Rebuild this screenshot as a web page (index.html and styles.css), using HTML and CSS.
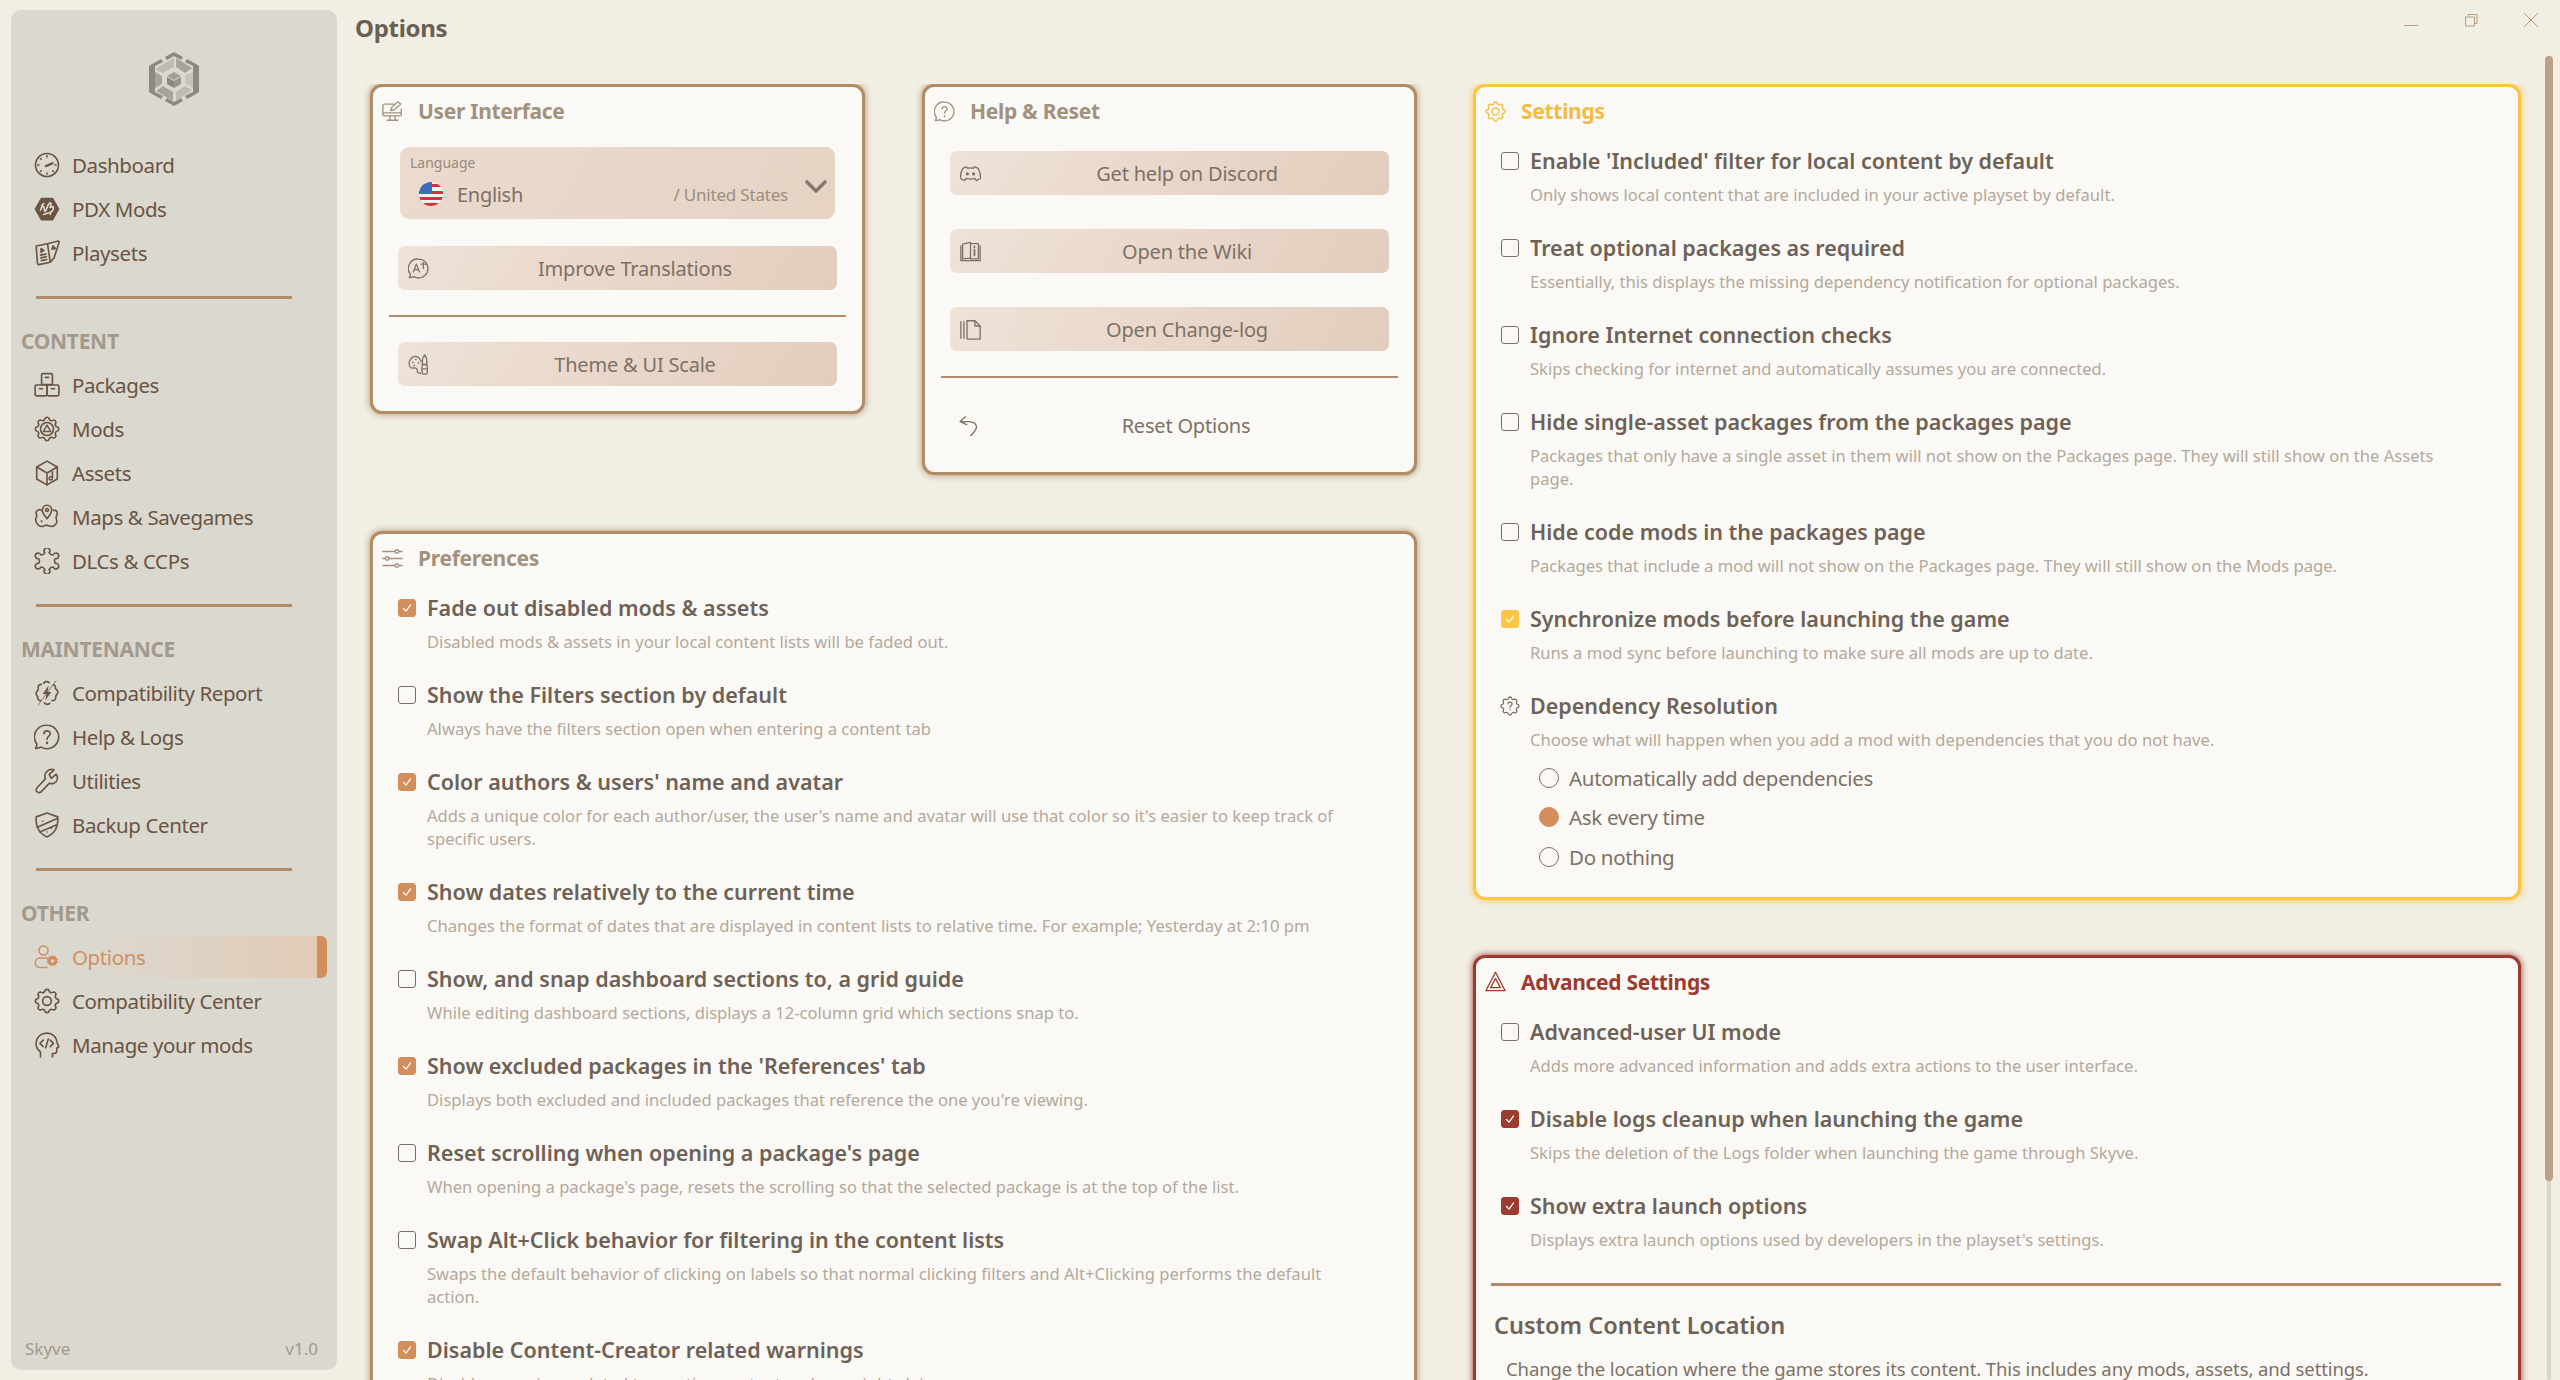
FILE: index.html
```html
<!DOCTYPE html>
<html lang="en">
<head>
    <meta charset="UTF-8">
    <meta name="viewport" content="width=device-width, initial-scale=1.0">
    <title>Skyve - Options</title>
    <link rel="stylesheet" href="styles.css">
</head>
<body>
    <svg class="icon-defs" width="0" height="0">
        <symbol id="i-dashboard" viewBox="0 0 24 24"><circle cx="12" cy="12" r="10.6"/><path d="M12 3.6v1M20.4 12h-1M3.6 12h1M12 20.4v-1M6 6l.7.7M18 18l-.7-.7M6 18l.7-.7"/><path d="M11 13l6-2.6" stroke-width="2.2"/></symbol>
        <symbol id="i-pdx" viewBox="0 0 24 24"><path class="solid" d="M6.5 1.5h11L23.5 12l-6 10.5h-11L.5 12z"/><path class="cut" d="M6 13c1-3 2-4 3-3s0 3 1 4 2-5 4-7 2 1 1 3 3-2 3 1-3 3-3 6M9 17c2-1 5-1 8-3M7 9l2-2"/></symbol>
        <symbol id="i-playsets" viewBox="0 0 24 24"><path d="M2 5.5l10.5-2 2.500 17-10.500 2.200c-.8.1-1.200-.3-1.300-1z"/><path d="M13 3.200L22.500 1c.6 0 .8.4.7 1L18.500 16.500l-3 3.500"/><path d="M6.500 8l2.500 1.500-2.500 2zM6 14l5-1M6.300 16.500l5-1M6.700 19l5-1M16.500 8.500l1.200-3 2 2.400z"/></symbol>
        <symbol id="i-packages" viewBox="0 0 24 24"><rect x="7" y="1.500" width="10" height="10" rx="1"/><rect x="1" y="12" width="11" height="10" rx="1.500"/><rect x="12" y="12" width="11" height="10" rx="1.500"/><path d="M10.500 5h3M5 15.500h3M16 15.500h3"/></symbol>
        <symbol id="i-mods" viewBox="0 0 24 24"><path d="M10.325 4.317c.426-1.756 2.924-1.756 3.350 0a1.724 1.724 0 0 0 2.573 1.066c1.543-.94 3.310.826 2.370 2.370a1.724 1.724 0 0 0 1.065 2.572c1.756.426 1.756 2.924 0 3.350a1.724 1.724 0 0 0-1.066 2.573c.94 1.543-.826 3.310-2.370 2.370a1.724 1.724 0 0 0-2.572 1.065c-.426 1.756-2.924 1.756-3.350 0a1.724 1.724 0 0 0-2.573-1.066c-1.543.94-3.310-.826-2.370-2.370a1.724 1.724 0 0 0-1.065-2.572c-1.756-.426-1.756-2.924 0-3.350a1.724 1.724 0 0 0 1.066-2.573c-.94-1.543.826-3.310 2.370-2.370 1 .608 2.296.07 2.572-1.065z" transform="translate(-2.400 -2.400) scale(1.200)" stroke-width="1.250"/><circle cx="12" cy="12" r="6"/><path d="M12 8.500l3.500 5.800h-7z" stroke-width="1.300"/></symbol>
        <symbol id="i-assets" viewBox="0 0 24 24"><path d="M12 1l9.500 5.500v11L12 23l-9.500-5.500v-11z"/><path d="M2.500 6.500L12 12l9.500-5.500M12 12v11"/><path d="M17 11v6a1.500 1.500 0 1 1-1.500-1.500H17"/></symbol>
        <symbol id="i-maps" viewBox="0 0 24 24"><path d="M7.500 6.500c-1-1.500-3-1.500-4-.8-1.500 1-1.800 3-1 4.500.6 1.100-.8 2.300-1 4 .1 3.500 3 6.800 6 6.500 2-.2 2.500-1.200 4-1.200s3 1.500 5 1.200c3-.3 5-3 4.500-5.500-.3-1.300-.8-2-.5-3.500.2-1 1-1.500 1-3 0-2-1.500-3-3.500-3"/><path d="M12 13.500c-2-2.500-4.300-5-4.300-8a4.300 4.300 0 0 1 8.600 0c0 3-2.300 5.500-4.300 8z"/><circle cx="12" cy="5.500" r="1.300"/><circle cx="7" cy="16" r="1" class="dot"/></symbol>
        <symbol id="i-dlc" viewBox="0 0 24 24"><path d="M10.060 4.240A2.600 2.600 0 1 1 13.940 4.240A4 4 0 0 0 17.750 6.440A2.600 2.600 0 1 1 19.690 9.790A4 4 0 0 0 19.690 14.210A2.600 2.600 0 1 1 17.750 17.560A4 4 0 0 0 13.940 19.760A2.600 2.600 0 1 1 10.060 19.760A4 4 0 0 0 6.250 17.560A2.600 2.600 0 1 1 4.310 14.210A4 4 0 0 0 4.310 9.790A2.600 2.600 0 1 1 6.250 6.440A4 4 0 0 0 10.060 4.240z"/></symbol>
        <symbol id="i-report" viewBox="0 0 24 24"><path d="M9 3c1-1.800 3.500-2 5-.6M18 4.500c1.500.2 2 2 1.800 3.500 2 1 3 3.500 1.500 5-.8.8-1.300 1.500-1.300 3 .2 2-1.500 3.500-3.500 3M14.500 21.500c-1.500 1.200-3.500 1.100-5-.5M6 19c-2 0-3-1.500-2.500-3.500C2.500 14.500 1 12 2.800 10.500 3.800 9.700 4 8.500 3.800 7.500 3.500 5.500 5 4 6.800 4"/><path class="solid" d="M13.500 5L8 13h3.500l-1 6 5.500-8h-3.500z"/><path d="M4 23L20 1" stroke-width=".7"/></symbol>
        <symbol id="i-help" viewBox="0 0 24 24"><path d="M12 1.200a10.800 10.800 0 1 1-5.500 20.100c-1.500.8-3.500 1.200-5 1.200.8-1 1.200-2.300 1.100-4A10.800 10.800 0 0 1 12 1.200z"/><path d="M9.200 9c0-3.500 5.800-3.500 5.800 0 0 2.300-3 2.200-3 5"/><path d="M12 17.300v.2" stroke-width="2.200"/></symbol>
        <symbol id="i-wrench" viewBox="0 0 24 24"><path d="M16 9.500l4.500-3.800c2 3 1.300 7-2 8.300-1.500.6-3 .5-4.200 0L6.500 22c-1 1-2.300 1-3.500 0-1.300-1-1.300-2.500-.2-3.700L10.500 10c-1-2.800-.3-5.500 2-7.300 1.800-1.400 4-1.700 6-1L14 5.800z"/></symbol>
        <symbol id="i-shield" viewBox="0 0 24 24"><path d="M12 1l10 3.500c.5 8-2 15-10 18.500C4 19.500 1.500 12.500 2 4.500z"/><path d="M3 14L21.500 6M5.500 18.500L20.500 12M8 8.500v0M16 15v0M12 18.500v0"/></symbol>
        <symbol id="i-options" viewBox="0 0 26 24"><circle cx="9.500" cy="5.500" r="4.500"/><path d="M13.500 13H6a4.500 4.500 0 0 0 0 9.500h7"/><path class="solid" d="M18.500 10l1.200 1.500 2-.4.500 2 1.800.9-.9 1.800.9 1.800-1.800.9-.5 2-2-.4-1.200 1.500-1.500-1.500-2 .4-.5-2-1.800-.9.9-1.800-.9-1.800 1.800-.9.500-2 2 .4z"/><circle class="hole" cx="18.500" cy="16" r="1.700"/></symbol>
        <symbol id="i-gear" viewBox="0 0 24 24"><path d="M10.325 4.317c.426-1.756 2.924-1.756 3.350 0a1.724 1.724 0 0 0 2.573 1.066c1.543-.94 3.310.826 2.370 2.370a1.724 1.724 0 0 0 1.065 2.572c1.756.426 1.756 2.924 0 3.350a1.724 1.724 0 0 0-1.066 2.573c.94 1.543-.826 3.310-2.370 2.370a1.724 1.724 0 0 0-2.572 1.065c-.426 1.756-2.924 1.756-3.350 0a1.724 1.724 0 0 0-2.573-1.066c-1.543.94-3.310-.826-2.370-2.370a1.724 1.724 0 0 0-1.065-2.572c-1.756-.426-1.756-2.924 0-3.350a1.724 1.724 0 0 0 1.066-2.573c-.94-1.543.826-3.310 2.370-2.370 1 .608 2.296.07 2.572-1.065z" transform="translate(-2.400 -2.400) scale(1.200)" stroke-width="1.300"/><circle cx="12" cy="12" r="4"/></symbol>
        <symbol id="i-head" viewBox="0 0 24 24"><path d="M6 23v-4.500C3 16 1.500 13 2 9.500 2.800 4 7 1 12 1c5 0 8.500 3.500 9 7.500.1 1.500.5 2.500 2 5-.8 1-1.500 1-2 1.300v3c0 1.500-1.500 2.200-4 2.200v3"/><path d="M8.500 7.500L5.500 10.500l3 3M15 7.500l3 3-3 3M13.200 6.500l-2.400 8"/></symbol>
        <symbol id="i-monitor" viewBox="0 0 24 24"><path d="M14 3.500H2.500A1.500 1.500 0 0 0 1 5v10.500A1.500 1.500 0 0 0 2.500 17h18a1.500 1.500 0 0 0 1.500-1.500V9"/><path d="M1 13.500h21M9 17v4.500M15 17v4.500M6 22h12"/><path d="M10 11l1-3.500L18 1l3.500 2.500L14 10z"/></symbol>
        <symbol id="i-translate" viewBox="0 0 24 24"><path d="M12 1.200a10.800 10.800 0 1 1-5.500 20.100c-1.500.8-3.500 1.200-5 1.200.8-1 1.200-2.300 1.100-4A10.800 10.800 0 0 1 12 1.200z"/><path d="M6 16L9.500 7l3.500 9M7.200 13.200h4.600M15 7h5M17.500 5v7"/></symbol>
        <symbol id="i-palette" viewBox="0 0 24 24"><path d="M15 8.500C13.500 3.500 9 1.500 5.500 3.500 2 5.500.2 10 2 14c1 2 3 2.500 5 2 2.500-.5 3.500.8 3.500 3 0 2 2 3.300 4 3"/><circle cx="5.500" cy="9.500" r="1" class="dot"/><circle cx="9" cy="6" r="1" class="dot"/><circle cx="12" cy="10" r="1" class="dot"/><circle cx="7" cy="13" r="1" class="dot"/><rect x="16" y="12" width="6" height="11" rx="2"/><path d="M16.500 12V7c0-1.500 1-4 2.500-6 1.500 2 2.500 4.500 2.500 6v5M16 17h6"/></symbol>
        <symbol id="i-discord" viewBox="0 0 24 24"><path d="M7.500 4.500C5.500 5 4 5.500 3 6.500 1.500 9.500.3 13.500.5 17.500c1.500 1.300 3.300 2 5 2.500l1.500-2.500c3 1 7 1 10 0l1.500 2.500c1.700-.5 3.500-1.200 5-2.500.2-4-1-8-2.500-11-1-1-2.500-1.500-4.500-2l-1 1.500c-2-.4-5-.4-7 0z"/><circle class="dot" cx="8.500" cy="12.500" r="1.800"/><circle class="dot" cx="15.500" cy="12.500" r="1.800"/></symbol>
        <symbol id="i-book" viewBox="0 0 24 24"><path d="M3 3.500L12 1.500v18l-9 1zM12 3h9v17.500h-9M1 5.500V22.500h22V5.500"/><path d="M16.500 10v6.500M16.500 6.500v1" stroke-width="2"/></symbol>
        <symbol id="i-changelog" viewBox="0 0 24 24"><path d="M8 2h9l6 6v15H9a1 1 0 0 1-1-1z"/><path d="M17 2v6h6M4.500 3v19M1 3v19"/></symbol>
        <symbol id="i-undo" viewBox="0 0 24 24"><path d="M8.500 2L2.500 7.500 10 11M3.500 7.500H13c5.500 0 8.500 3.500 8 7-.4 3-2.500 5-5 7.500l-1.500 1.500"/></symbol>
        <symbol id="i-sliders" viewBox="0 0 24 24"><path d="M1 4h14M19 4h4M1 12h3M8 12h15M1 20h14M19 20h4"/><circle cx="17" cy="4" r="2"/><circle cx="6" cy="12" r="2"/><circle cx="17" cy="20" r="2"/></symbol>
        <symbol id="i-depend" viewBox="0 0 24 24"><path d="M10.325 4.317c.426-1.756 2.924-1.756 3.350 0a1.724 1.724 0 0 0 2.573 1.066c1.543-.94 3.310.826 2.370 2.370a1.724 1.724 0 0 0 1.065 2.572c1.756.426 1.756 2.924 0 3.350a1.724 1.724 0 0 0-1.066 2.573c.94 1.543-.826 3.310-2.370 2.370a1.724 1.724 0 0 0-2.572 1.065c-.426 1.756-2.924 1.756-3.350 0a1.724 1.724 0 0 0-2.573-1.066c-1.543.94-3.310-.826-2.370-2.370a1.724 1.724 0 0 0-1.065-2.572c-1.756-.426-1.756-2.924 0-3.350a1.724 1.724 0 0 0 1.066-2.573c-.94-1.543.826-3.310 2.370-2.370 1 .608 2.296.07 2.572-1.065z" transform="translate(-2.400 -2.400) scale(1.200)" stroke-width="1.300"/><path d="M9.500 9.500c0-3 5-3 5 0 0 2-2.500 1.700-2.500 4M12 16v.5"/></symbol>
        <symbol id="i-warning" viewBox="0 0 24 24"><path d="M12 1.500L23 22.500H1z"/><path d="M12 8.500L17.500 19h-11z"/></symbol>
        <symbol id="i-check" viewBox="0 0 18 18"><path d="M5 9.500l3 3 5-7"/></symbol>
    </svg>

    <div class="app">
        <aside class="sidebar">
            <div class="logo">
                <svg viewBox="0 0 52 56" width="52" height="56">
                    <path d="M26 1l9 5-2 3-7-4-7 4-2-3z" fill="#8e887f"/>
                    <path d="M26 55l-9-5 2-3 7 4 7-4 2 3z" fill="#8e887f"/>
                    <path d="M4 13l9-5 2 3-8 4v9H1v-9zM48 43l-9 5-2-3 8-4v-9h6v9z" fill="#8e887f"/>
                    <path d="M48 13l-9-5-2 3 8 4v18h6V15zM4 43l9 5 2-3-8-4V23H1v18z" fill="#8e887f"/>
                    <path d="M26 7v9l-11 6-8-4z" fill="#c0bbb1"/>
                    <path d="M28 7l16 10-7 5-9-6z" fill="#a9a399"/>
                    <path d="M45 21v16l-8-5v-8z" fill="#c9c4ba"/>
                    <path d="M7 21l7 4v8l-7 4z" fill="#a9a399"/>
                    <path d="M8 40l7-5 10 6v9z" fill="#a9a399"/>
                    <path d="M28 41l9-6 7 4-16 11z" fill="#c0bbb1"/>
                    <path d="M26 19l9 5v10l-9 5-9-5V24z" fill="#dbd8d0"/>
                    <path d="M26 21l7 4-7 4-7-4z" fill="#a39d93"/>
                    <path d="M19 26l7 4v7l-7-4z" fill="#8e887f"/>
                    <path d="M33 26l-7 4v7l7-4z" fill="#9a948a"/>
                </svg>
            </div>
            <nav class="nav">
                <a class="nav-item"><svg class="nav-icon"><use href="#i-dashboard"/></svg>Dashboard</a>
                <a class="nav-item"><svg class="nav-icon"><use href="#i-pdx"/></svg>PDX Mods</a>
                <a class="nav-item"><svg class="nav-icon"><use href="#i-playsets"/></svg>Playsets</a>
                <hr class="nav-rule">
                <h2 class="nav-head">CONTENT</h2>
                <a class="nav-item"><svg class="nav-icon"><use href="#i-packages"/></svg>Packages</a>
                <a class="nav-item"><svg class="nav-icon"><use href="#i-mods"/></svg>Mods</a>
                <a class="nav-item"><svg class="nav-icon"><use href="#i-assets"/></svg>Assets</a>
                <a class="nav-item"><svg class="nav-icon"><use href="#i-maps"/></svg>Maps &amp; Savegames</a>
                <a class="nav-item"><svg class="nav-icon"><use href="#i-dlc"/></svg>DLCs &amp; CCPs</a>
                <hr class="nav-rule">
                <h2 class="nav-head">MAINTENANCE</h2>
                <a class="nav-item"><svg class="nav-icon"><use href="#i-report"/></svg>Compatibility Report</a>
                <a class="nav-item"><svg class="nav-icon"><use href="#i-help"/></svg>Help &amp; Logs</a>
                <a class="nav-item"><svg class="nav-icon"><use href="#i-wrench"/></svg>Utilities</a>
                <a class="nav-item"><svg class="nav-icon"><use href="#i-shield"/></svg>Backup Center</a>
                <hr class="nav-rule">
                <h2 class="nav-head">OTHER</h2>
                <a class="nav-item active"><svg class="nav-icon"><use href="#i-options"/></svg>Options</a>
                <a class="nav-item"><svg class="nav-icon"><use href="#i-gear"/></svg>Compatibility Center</a>
                <a class="nav-item"><svg class="nav-icon"><use href="#i-head"/></svg>Manage your mods</a>
            </nav>
            <footer class="side-foot"><span>Skyve</span><span>v1.0</span></footer>
        </aside>

        <main class="main">
            <header class="topbar">
                <h1 class="page-title">Options</h1>
                <div class="win-controls">
                    <svg width="14" height="14" viewBox="0 0 14 14"><path d="M0 12.500h14"/></svg>
                    <svg width="14" height="14" viewBox="0 0 14 14"><rect x="1.500" y="4" width="9" height="9"/><path d="M4 3.500V1.500h9v9h-2"/></svg>
                    <svg width="14" height="14" viewBox="0 0 14 14"><path d="M0 0l14 14M14 0L0 14"/></svg>
                </div>
            </header>
            <div class="content">
                <div class="column">
                    <div class="card-row">
                        <section class="card card-small">
                            <h3 class="card-title"><svg class="title-icon"><use href="#i-monitor"/></svg>User Interface</h3>
                            <div class="select">
                                <span class="select-label">Language</span>
                                <div class="select-value">
                                    <svg class="flag" viewBox="0 0 24 24">
                                        <defs><clipPath id="flag-clip"><circle cx="12" cy="12" r="12"/></clipPath></defs>
                                        <g clip-path="url(#flag-clip)">
                                            <rect width="24" height="24" fill="#f2f2f2"/>
                                            <path d="M0 2h24v3H0zM0 9h24v3H0zM0 15h24v3H0zM0 21h24v3H0z" fill="#d8303c"/>
                                            <rect width="13" height="12" fill="#3f6db5"/>
                                        </g>
                                    </svg>
                                    <span class="lang-name">English</span>
                                    <span class="lang-region">/ United States</span>
                                    <svg class="chevron" viewBox="0 0 22 14"><path d="M2 2l9 9 9-9"/></svg>
                                </div>
                            </div>
                            <a class="btn"><svg class="btn-icon"><use href="#i-translate"/></svg><span>Improve Translations</span></a>
                            <hr class="rule rule-tight">
                            <a class="btn"><svg class="btn-icon"><use href="#i-palette"/></svg><span>Theme &amp; UI Scale</span></a>
                        </section>

                        <section class="card card-small">
                            <h3 class="card-title"><svg class="title-icon"><use href="#i-help"/></svg>Help &amp; Reset</h3>
                            <div class="btn-stack">
                                <a class="btn"><svg class="btn-icon"><use href="#i-discord"/></svg><span>Get help on Discord</span></a>
                                <a class="btn"><svg class="btn-icon"><use href="#i-book"/></svg><span>Open the Wiki</span></a>
                                <a class="btn"><svg class="btn-icon"><use href="#i-changelog"/></svg><span>Open Change-log</span></a>
                            </div>
                            <hr class="rule rule-reset">
                            <a class="btn btn-plain"><svg class="btn-icon"><use href="#i-undo"/></svg><span>Reset Options</span></a>
                        </section>
                    </div>

                    <section class="card card-prefs">
                        <h3 class="card-title"><svg class="title-icon"><use href="#i-sliders"/></svg>Preferences</h3>
                        <div class="options">
                            <div class="option">
                                <span class="box on"><svg viewBox="0 0 18 18"><use href="#i-check"/></svg></span>
                                <div><div class="option-name">Fade out disabled mods &amp; assets</div><p class="option-desc">Disabled mods &amp; assets in your local content lists will be faded out.</p></div>
                            </div>
                            <div class="option">
                                <span class="box"></span>
                                <div><div class="option-name">Show the Filters section by default</div><p class="option-desc">Always have the filters section open when entering a content tab</p></div>
                            </div>
                            <div class="option">
                                <span class="box on"><svg viewBox="0 0 18 18"><use href="#i-check"/></svg></span>
                                <div><div class="option-name">Color authors &amp; users' name and avatar</div><p class="option-desc">Adds a unique color for each author/user, the user's name and avatar will use that color so it's easier to keep track of specific users.</p></div>
                            </div>
                            <div class="option">
                                <span class="box on"><svg viewBox="0 0 18 18"><use href="#i-check"/></svg></span>
                                <div><div class="option-name">Show dates relatively to the current time</div><p class="option-desc">Changes the format of dates that are displayed in content lists to relative time. For example; Yesterday at 2:10 pm</p></div>
                            </div>
                            <div class="option">
                                <span class="box"></span>
                                <div><div class="option-name">Show, and snap dashboard sections to, a grid guide</div><p class="option-desc">While editing dashboard sections, displays a 12-column grid which sections snap to.</p></div>
                            </div>
                            <div class="option">
                                <span class="box on"><svg viewBox="0 0 18 18"><use href="#i-check"/></svg></span>
                                <div><div class="option-name">Show excluded packages in the 'References' tab</div><p class="option-desc">Displays both excluded and included packages that reference the one you're viewing.</p></div>
                            </div>
                            <div class="option">
                                <span class="box"></span>
                                <div><div class="option-name">Reset scrolling when opening a package's page</div><p class="option-desc">When opening a package's page, resets the scrolling so that the selected package is at the top of the list.</p></div>
                            </div>
                            <div class="option">
                                <span class="box"></span>
                                <div><div class="option-name">Swap Alt+Click behavior for filtering in the content lists</div><p class="option-desc">Swaps the default behavior of clicking on labels so that normal clicking filters and Alt+Clicking performs the default action.</p></div>
                            </div>
                            <div class="option">
                                <span class="box on"><svg viewBox="0 0 18 18"><use href="#i-check"/></svg></span>
                                <div><div class="option-name">Disable Content-Creator related warnings</div><p class="option-desc">Disables warnings related to creating content and copyright claims.</p></div>
                            </div>
                        </div>
                    </section>
                </div>

                <div class="column">
                    <section class="card card-settings">
                        <h3 class="card-title"><svg class="title-icon"><use href="#i-gear"/></svg>Settings</h3>
                        <div class="options">
                            <div class="option">
                                <span class="box"></span>
                                <div><div class="option-name">Enable 'Included' filter for local content by default</div><p class="option-desc">Only shows local content that are included in your active playset by default.</p></div>
                            </div>
                            <div class="option">
                                <span class="box"></span>
                                <div><div class="option-name">Treat optional packages as required</div><p class="option-desc">Essentially, this displays the missing dependency notification for optional packages.</p></div>
                            </div>
                            <div class="option">
                                <span class="box"></span>
                                <div><div class="option-name">Ignore Internet connection checks</div><p class="option-desc">Skips checking for internet and automatically assumes you are connected.</p></div>
                            </div>
                            <div class="option">
                                <span class="box"></span>
                                <div><div class="option-name">Hide single-asset packages from the packages page</div><p class="option-desc">Packages that only have a single asset in them will not show on the Packages page. They will still show on the Assets page.</p></div>
                            </div>
                            <div class="option">
                                <span class="box"></span>
                                <div><div class="option-name">Hide code mods in the packages page</div><p class="option-desc">Packages that include a mod will not show on the Packages page. They will still show on the Mods page.</p></div>
                            </div>
                            <div class="option">
                                <span class="box on"><svg viewBox="0 0 18 18"><use href="#i-check"/></svg></span>
                                <div><div class="option-name">Synchronize mods before launching the game</div><p class="option-desc">Runs a mod sync before launching to make sure all mods are up to date.</p></div>
                            </div>
                            <div class="option option-last">
                                <svg class="dep-icon"><use href="#i-depend"/></svg>
                                <div>
                                    <div class="option-name">Dependency Resolution</div>
                                    <p class="option-desc">Choose what will happen when you add a mod with dependencies that you do not have.</p>
                                    <ul class="radios">
                                        <li><span class="radio"></span>Automatically add dependencies</li>
                                        <li><span class="radio on"></span>Ask every time</li>
                                        <li><span class="radio"></span>Do nothing</li>
                                    </ul>
                                </div>
                            </div>
                        </div>
                    </section>

                    <section class="card card-advanced">
                        <h3 class="card-title"><svg class="title-icon"><use href="#i-warning"/></svg>Advanced Settings</h3>
                        <div class="options">
                            <div class="option">
                                <span class="box"></span>
                                <div><div class="option-name">Advanced-user UI mode</div><p class="option-desc">Adds more advanced information and adds extra actions to the user interface.</p></div>
                            </div>
                            <div class="option">
                                <span class="box on"><svg viewBox="0 0 18 18"><use href="#i-check"/></svg></span>
                                <div><div class="option-name">Disable logs cleanup when launching the game</div><p class="option-desc">Skips the deletion of the Logs folder when launching the game through Skyve.</p></div>
                            </div>
                            <div class="option">
                                <span class="box on"><svg viewBox="0 0 18 18"><use href="#i-check"/></svg></span>
                                <div><div class="option-name">Show extra launch options</div><p class="option-desc">Displays extra launch options used by developers in the playset's settings.</p></div>
                            </div>
                        </div>
                        <hr class="rule rule-custom">
                        <h4 class="custom-title">Custom Content Location</h4>
                        <p class="custom-text">Change the location where the game stores its content. This includes any mods, assets, and settings.</p>
                    </section>
                </div>
            </div>
        </main>

        <div class="scrollbar"><div class="scroll-thumb"></div></div>
    </div>
</body>
</html>
```

FILE: styles.css
```css
* {
    box-sizing: border-box;
}

html, body {
    height: 100%;
}

body {
    margin: 0;
    overflow: hidden;
    background-color: #f1eee3;
    font-family: 'Noto Sans', 'Open Sans', sans-serif;
    color: #6e6257;
}

h1, h2, h3, h4, p, ul, hr {
    margin: 0;
    padding: 0;
}

.icon-defs {
    position: absolute;
}

svg {
    fill: none;
    stroke: currentColor;
    stroke-width: 1.5;
    stroke-linecap: round;
    stroke-linejoin: round;
    flex: none;
}

.solid, .dot {
    fill: currentColor;
    stroke: none;
}

.cut {
    stroke: #dbd8d0;
}

.hole {
    fill: #dbd8d0;
    stroke: none;
}

.app {
    display: flex;
    height: 1380px;
}

/* sidebar */
.sidebar {
    width: 326px;
    height: 1360px;
    margin: 10px 0 0 11px;
    padding: 41px 0 0;
    background-color: #dbd8d0;
    border-radius: 10px;
    display: flex;
    flex-direction: column;
    flex: none;
}

.logo {
    display: flex;
    justify-content: center;
    margin-bottom: 36px;
    height: 56px;
}

.logo svg {
    stroke: none;
}

.nav {
    display: flex;
    flex-direction: column;
    flex: 1;
}

.nav-item {
    display: flex;
    align-items: center;
    gap: 12px;
    height: 44px;
    padding-left: 23px;
    font-size: 20.5px;
    color: #6a5442;
    letter-spacing: -0.4px;
}

.nav-icon {
    width: 26px;
    height: 26px;
    color: #6a5442;
}

.nav-item.active {
    color: #d38e5d;
    margin-right: 10px;
    height: 42px;
    margin-top: 1px;
    margin-bottom: 1px;
    border-radius: 0 6px 6px 0;
    border-right: 10px solid #d38e5d;
    background: linear-gradient(90deg, rgba(229, 198, 170, 0) 25%, rgba(229, 198, 170, 0.7) 100%);
}

.nav-item.active .nav-icon {
    color: #d38e5d;
}

.nav-rule {
    border: 0;
    height: 3px;
    background-color: #b08d68;
    margin: 21px 45px 0 25px;
}

.nav-head {
    margin: 28px 0 8px 10px;
    font-size: 21px;
    line-height: 28px;
    font-weight: 700;
    color: #a3998d;
    letter-spacing: -0.3px;
}

.side-foot {
    display: flex;
    justify-content: space-between;
    padding: 0 19px 10px 14px;
    font-size: 17px;
    color: #a3998d;
}

/* top bar */
.main {
    flex: 1;
    min-width: 0;
    display: flex;
    flex-direction: column;
    padding-left: 18px;
}

.topbar {
    display: flex;
    flex: none;
    justify-content: space-between;
    height: 84px;
    padding-top: 12px;
}

.page-title {
    font-size: 24px;
    line-height: 32px;
    font-weight: 700;
    color: #6b5f54;
    letter-spacing: -0.3px;
}

.win-controls {
    display: flex;
    gap: 46px;
    padding-right: 22px;
    color: #b59c82;
    margin-top: 1px;
}

.win-controls svg {
    stroke-width: 1;
    stroke-linecap: butt;
}

/* cards */
.content {
    display: grid;
    grid-template-columns: 1047px 1048px;
    gap: 56px;
    padding-left: 15px;
    align-items: start;
    overflow: hidden;
}

.column {
    display: flex;
    flex-direction: column;
    gap: 57px;
    min-width: 0;
    padding-top: 4px;
    margin-top: -4px;
}

.card-row {
    display: flex;
    justify-content: space-between;
    align-items: flex-start;
}

.card {
    --accent: #b08d68;
    --title: #a3917f;
    position: relative;
    background-color: #fbf9f5;
    border: 3px solid var(--accent);
    border-radius: 12px;
    box-shadow: 0 0 7px var(--accent);
    padding: 9px 0 0;
}

.card-small {
    width: 495px;
    padding-bottom: 25px;
}

.card-prefs {
    margin-top: -1px;
}

.card-settings {
    --accent: #fdc544;
    --title: #f2bb45;
}

.card-advanced {
    --accent: #9c3b2f;
    --title: #9c3b2f;
    margin-top: -2px;
}

.card-title {
    display: flex;
    align-items: center;
    gap: 15px;
    padding-left: 9px;
    height: 30px;
    font-size: 21px;
    font-weight: 700;
    color: var(--title);
    letter-spacing: -0.3px;
}

.title-icon {
    width: 21px;
    height: 21px;
    color: var(--title);
}

/* buttons */
.btn {
    display: flex;
    align-items: center;
    height: 44px;
    margin: 0 25px;
    padding: 0 10px;
    border-radius: 7px;
    background: linear-gradient(120deg, #efe2d7 0%, #e2cdbd 100%);
    font-size: 20px;
    color: #7d7166;
    letter-spacing: -0.2px;
}

.btn span {
    flex: 1;
    text-align: center;
}

.btn-icon {
    width: 21px;
    height: 21px;
    color: #7d7166;
    margin-right: 14px;
}

.btn-plain {
    background: none;
    padding-left: 8px;
    margin-top: 25px;
}

.btn-stack {
    display: flex;
    flex-direction: column;
    gap: 34px;
    margin-top: 25px;
}

.rule {
    border: 0;
    height: 2px;
    background-color: #b08d68;
}

.rule-tight {
    margin: 25px 16px;
}

.rule-reset {
    margin: 25px 16px 0;
}

.rule-custom {
    margin: 5px 17px 0 15px;
    height: 3px;
}

/* language select */
.select {
    margin: 21px 27px 27px;
    height: 72px;
    padding: 7px 8px 0 10px;
    border-radius: 9px;
    background: linear-gradient(120deg, #eadbce 0%, #e6d3c4 100%);
}

.select-label {
    display: block;
    font-size: 14px;
    line-height: 18px;
    color: #998a7c;
}

.select-value {
    display: flex;
    align-items: center;
    height: 38px;
    margin-top: 3px;
    padding-left: 9px;
}

.flag {
    width: 24px;
    height: 24px;
    stroke: none;
}

.lang-name {
    margin-left: 14px;
    font-size: 20px;
    color: #7d7166;
    letter-spacing: -0.3px;
}

.lang-region {
    margin-left: auto;
    font-size: 17px;
    color: #9a8e82;
    letter-spacing: -0.2px;
}

.chevron {
    width: 22px;
    height: 14px;
    margin: -15px 0 0 17px;
    color: #857a6f;
    stroke-width: 3.6;
}

/* option lists */
.options {
    padding: 20px 0 0 25px;
    display: flex;
    flex-direction: column;
}

.option {
    display: flex;
    align-items: flex-start;
    gap: 11px;
    margin-bottom: 27px;
}

.option-name {
    font-size: 21.5px;
    line-height: 29px;
    font-weight: 600;
    color: #6e6257;
}

.option-desc {
    margin-top: 8px;
    width: 930px;
    font-size: 16.6px;
    line-height: 23px;
    color: #b3a89c;
}

.box {
    flex: none;
    width: 18px;
    height: 18px;
    margin-top: 6px;
    border: 1.5px solid #7b6f63;
    border-radius: 3px;
    display: flex;
}

.box svg {
    color: #fff;
    stroke-width: 1.4;
}

.box.on {
    background-color: #d38e5d;
    border-color: #d38e5d;
}

.card-settings .box.on {
    background-color: #fdc544;
    border-color: #fdc544;
}

.card-advanced .box.on {
    background-color: #9c3b2f;
    border-color: #9c3b2f;
}

.dep-icon {
    width: 20px;
    height: 20px;
    margin: 5px -1px 0 -1px;
    color: #7b6f63;
    stroke-width: 1.4;
}

.option-last {
    margin-bottom: 20px;
}

.radios {
    list-style: none;
    margin: 7px 0 0 9px;
}

.radios li {
    display: flex;
    align-items: center;
    gap: 10px;
    height: 39.5px;
    font-size: 20.5px;
    color: #7d7166;
    letter-spacing: -0.3px;
}

.radio {
    width: 20px;
    height: 20px;
    border: 1.5px solid #7b6f63;
    border-radius: 50%;
}

.radio.on {
    background-color: #d38e5d;
    border-color: #d38e5d;
}

.custom-title {
    margin: 23px 0 0 18px;
    font-size: 23.5px;
    line-height: 32px;
    font-weight: 600;
    color: #6e6257;
}

.custom-text {
    margin: 14px 0 20px 30px;
    font-size: 18.5px;
    line-height: 28px;
    color: #7d7166;
    letter-spacing: -0.1px;
}

/* scrollbar */
.scrollbar {
    position: absolute;
    top: 56px;
    right: 7px;
    width: 8px;
    height: 1324px;
    display: flex;
    justify-content: center;
}

.scrollbar::before {
    content: "";
    position: absolute;
    top: 0;
    bottom: 0;
    width: 4px;
    border-radius: 2px;
    background-color: #dfd3c3;
}

.scroll-thumb {
    position: relative;
    width: 8px;
    height: 1125px;
    border-radius: 4px;
    background-color: #bca283;
}
```
